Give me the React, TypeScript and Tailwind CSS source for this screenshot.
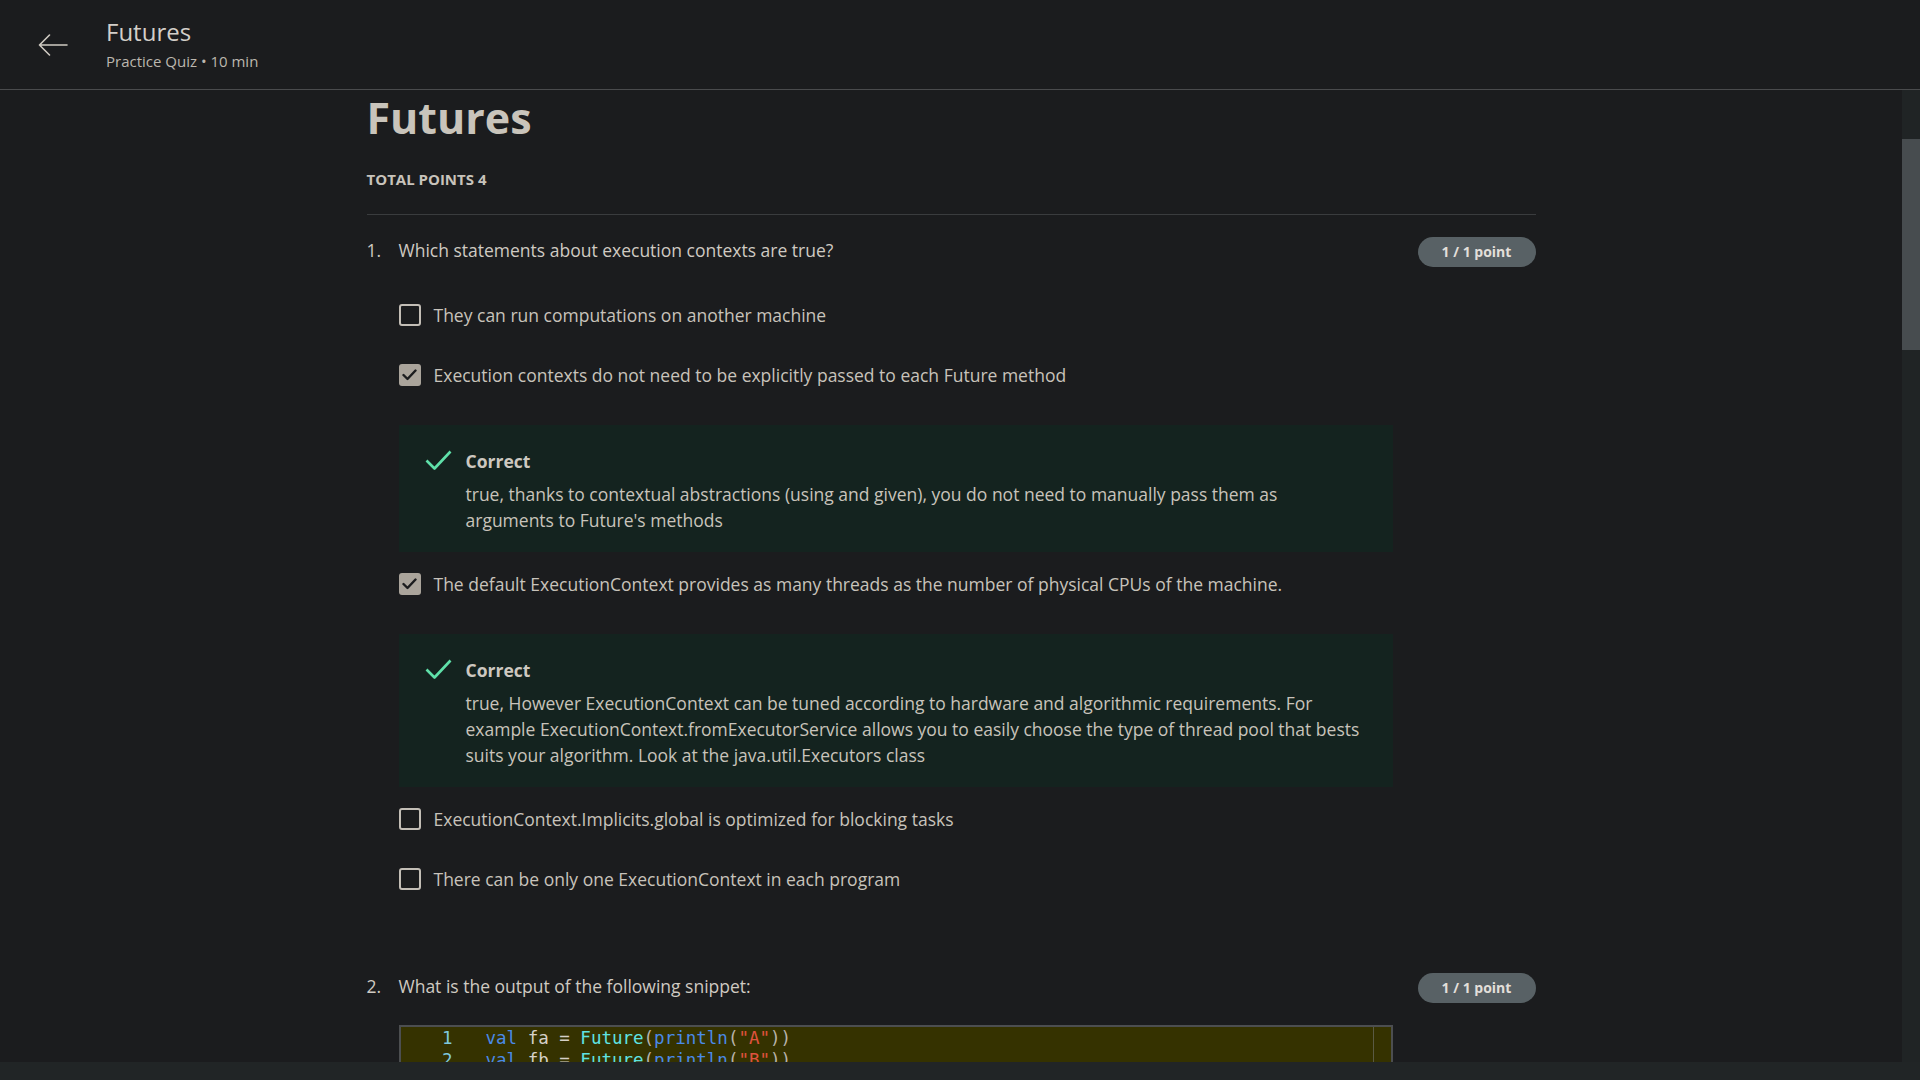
import React from 'react';

type Option = {
  text: string;
  checked: boolean;
  feedback?: string[];
};

const question1: Option[] = [
  { text: 'They can run computations on another machine', checked: false },
  {
    text: 'Execution contexts do not need to be explicitly passed to each Future method',
    checked: true,
    feedback: [
      'true, thanks to contextual abstractions (using and given), you do not need to manually pass them as',
      "arguments to Future's methods",
    ],
  },
  {
    text: 'The default ExecutionContext provides as many threads as the number of physical CPUs of the machine.',
    checked: true,
    feedback: [
      'true, However ExecutionContext can be tuned according to hardware and algorithmic requirements. For',
      'example ExecutionContext.fromExecutorService allows you to easily choose the type of thread pool that bests',
      'suits your algorithm. Look at the java.util.Executors class',
    ],
  },
  { text: 'ExecutionContext.Implicits.global is optimized for blocking tasks', checked: false },
  { text: 'There can be only one ExecutionContext in each program', checked: false },
];

function Checkbox({ checked }: { checked: boolean }) {
  if (checked) {
    return (
      <span className="w-[22px] h-[22px] rounded-[3px] bg-[#aaa49b] flex items-center justify-center shrink-0">
        <svg width="15" height="12" viewBox="0 0 15 12" fill="none">
          <polyline points="1.5,6 5.5,10 13.5,1.5" stroke="#1b1c1e" strokeWidth="2.4" strokeLinecap="round" strokeLinejoin="round" />
        </svg>
      </span>
    );
  }
  return <span className="w-[22px] h-[22px] rounded-[3px] border-2 border-[#c3beb6] shrink-0" />;
}

function Feedback({ lines }: { lines: string[] }) {
  return (
    <div className="bg-[#14231f] pl-[26px] pr-[24px] pt-[23px] pb-[19px] flex gap-[14px]">
      <svg width="27" height="20" viewBox="0 0 27 20" fill="none" className="mt-[2px] shrink-0">
        <polyline points="1.5,10.5 9.5,18.5 25.5,1.5" stroke="#5fe0a9" strokeWidth="2.6" strokeLinejoin="round" />
      </svg>
      <div>
        <div className="text-[17.5px] leading-[26px] font-bold text-[#cdc8c0]">Correct</div>
        <div className="mt-[7px] text-[17.5px] leading-[26px] text-[#c8c3bb]">
          {lines.map((l) => (
            <div key={l} className="whitespace-nowrap">
              {l}
            </div>
          ))}
        </div>
      </div>
    </div>
  );
}

function Badge() {
  return (
    <span className="w-[118px] h-[30px] rounded-full bg-[#586165] text-[#e2dfda] text-[14px] font-bold flex items-center justify-center shrink-0">
      1 / 1 point
    </span>
  );
}

function CodeLine({ n, letter }: { n: number; letter: string }) {
  return (
    <div className="flex h-[22px] items-center">
      <span className="w-[52px] text-right text-[#7fc8dc]">{n}</span>
      <span className="ml-[33px] whitespace-pre">
        <span className="text-[#4a8ae8]">val</span>
        <span className="text-[#d5d0c8]"> f{letter.toLowerCase()} = </span>
        <span className="text-[#5fe3e3]">Future</span>
        <span className="text-[#b8b3ab]">(</span>
        <span className="text-[#4a8ae8]">println</span>
        <span className="text-[#b8b3ab]">(</span>
        <span className="text-[#e0533f]">"{letter}"</span>
        <span className="text-[#b8b3ab]">))</span>
      </span>
    </div>
  );
}

export default function App() {
  return (
    <div className="h-screen w-full bg-[#1b1c1e] flex flex-col overflow-hidden font-['Open_Sans',sans-serif] text-[#c8c3bb]">
      {/* Header */}
      <header className="h-[90px] shrink-0 border-b border-[#4a4b4d] flex items-start pl-[38px] pt-[18px]">
        <svg width="30" height="22" viewBox="0 0 30 22" fill="none" className="mt-[16px]">
          <path d="M29 11H1.5M11.5 1L1.5 11l10 10" stroke="#cfcac2" strokeWidth="1.6" strokeLinecap="round" strokeLinejoin="round" />
        </svg>
        <div className="ml-[38px]">
          <div className="text-[24px] leading-[1.2] text-[#d3cfc9]">Futures</div>
          <div className="mt-[4px] text-[15px] leading-[20px] text-[#bcb7ae]">Practice Quiz • 10 min</div>
        </div>
      </header>

      <div className="flex-1 flex min-h-0">
        {/* Scrolling content */}
        <main className="flex-1 overflow-hidden">
          <div className="w-[1169px] mx-auto">
            <h1 className="pt-[2px] text-[43px] leading-[1.2] font-bold text-[#c9c4bb]">Futures</h1>
            <div className="mt-[25px] pb-[25px] border-b border-[#3a3c3e] text-[15px] leading-[20px] font-bold text-[#c8c3bb]">
              TOTAL POINTS 4
            </div>

            {/* Question 1 */}
            <div className="mt-[22px] flex items-start justify-between">
              <div className="flex text-[17.5px] leading-[26px] text-[#cfcac2]">
                <span className="w-[32px]">1.</span>
                <span>Which statements about execution contexts are true?</span>
              </div>
              <Badge />
            </div>

            <div className="pl-[32px] w-[1026px]">
              {question1.map((o, i) => (
                <div key={o.text}>
                  <div
                    className={
                      i === 0
                        ? 'mt-[34px] flex items-center gap-[13px] h-[28px]'
                        : question1[i - 1].feedback
                          ? 'mt-[18px] flex items-center gap-[13px] h-[28px]'
                          : 'mt-[32px] flex items-center gap-[13px] h-[28px]'
                    }
                  >
                    <Checkbox checked={o.checked} />
                    <span className="text-[17.5px] leading-[28px] text-[#c8c3bb]">{o.text}</span>
                  </div>
                  {o.feedback && (
                    <div className="mt-[36px]">
                      <Feedback lines={o.feedback} />
                    </div>
                  )}
                </div>
              ))}
            </div>

            {/* Question 2 */}
            <div className="mt-[80px] flex items-start justify-between">
              <div className="flex text-[17.5px] leading-[26px] text-[#cfcac2]">
                <span className="w-[32px]">2.</span>
                <span>What is the output of the following snippet:</span>
              </div>
              <Badge />
            </div>

            <div className="ml-[32px] mt-[22px] w-[994px] bg-[#353200] border-t-2 border-l-2 border-r-2 border-[#4c4e50] flex">
              <div className="flex-1 pt-[1px] font-['DejaVu_Sans_Mono',monospace] text-[17.5px]">
                <CodeLine n={1} letter="A" />
                <CodeLine n={2} letter="B" />
                <CodeLine n={3} letter="C" />
              </div>
              <div className="w-[18px] border-l border-[#5a5a44]" />
            </div>
          </div>
        </main>

        {/* Vertical scrollbar */}
        <div className="w-[18px] shrink-0 bg-[#202425] flex flex-col">
          <div className="mt-[49px] h-[211px] bg-[#474c4f]" />
        </div>
      </div>

      {/* Bottom bar */}
      <div className="h-[18px] shrink-0 bg-[#212526]" />
    </div>
  );
}
